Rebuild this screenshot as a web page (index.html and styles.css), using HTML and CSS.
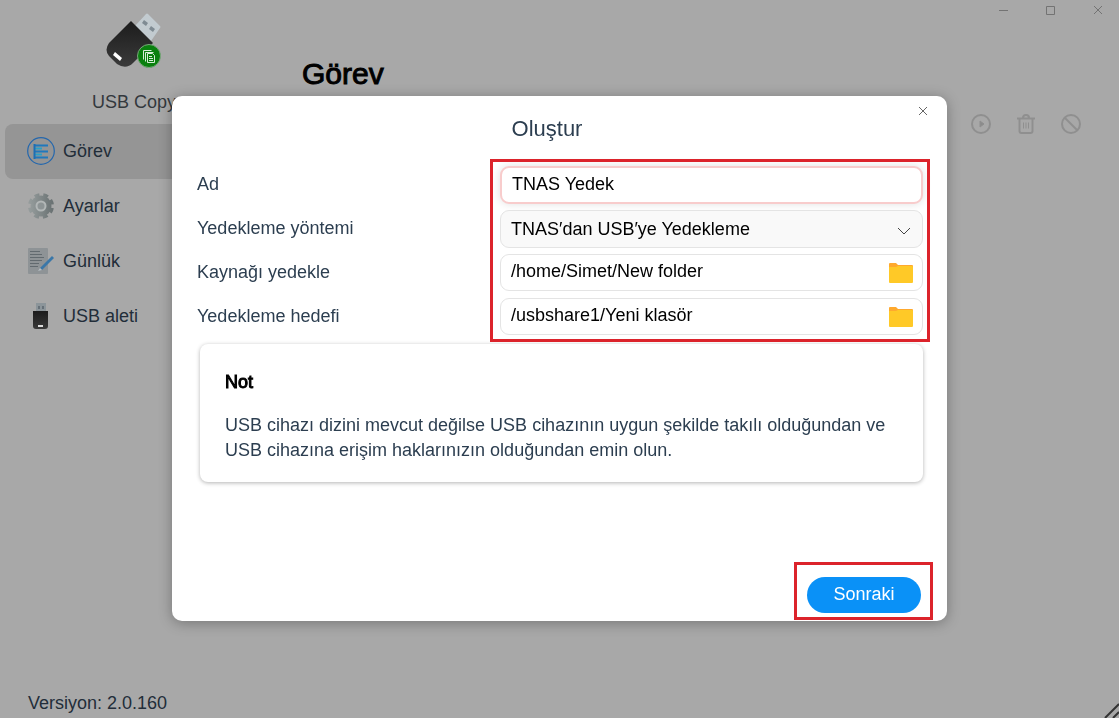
FILE: index.html
```html
<!DOCTYPE html>
<html lang="tr">
<head>
    <meta charset="UTF-8">
    <meta name="viewport" content="width=device-width, initial-scale=1.0">
    <title>USB Copy</title>
    <link rel="stylesheet" href="styles.css">
</head>
<body>
    <div class="app">
        <aside class="sidebar">
            <div class="brand">
                <svg width="56" height="56" viewBox="0 0 56 56">
                    <defs>
                        <linearGradient id="usbBody" x1="0" y1="0" x2="0" y2="1">
                            <stop offset="0" stop-color="#1c1c1c"/>
                            <stop offset="1" stop-color="#3a3a3a"/>
                        </linearGradient>
                    </defs>
                    <path d="M29 13 L40 1 Q41 0 42 1 L54 13 Q55 14 54 15 L45 28 Z" fill="#c2cbd0"/>
                    <path d="M38 7l4 3-2 3-4-3zM45 13l4 3-2 3-4-3z" fill="#7f8b93"/>
                    <path d="M25 8 L47 30 L27 50 Q20 57 11 51 L3 43 Q-2 37 3 30 Z" fill="url(#usbBody)"/>
                    <path d="M9 39l7 6-2 3-7-6z" fill="#fff"/>
                    <circle cx="43" cy="43" r="11.5" fill="#0a800f" stroke="#7ba67d"/>
                    <path d="M37.500 46.500v-9h8M39.500 48.500v-9h8" fill="none" stroke="#d6ecd6"/>
                    <path d="M41.500 40.500h5l2 2v7h-7z" fill="#0a800f" stroke="#d6ecd6"/>
                    <path d="M43 43.500h3M43 45.500h4M43 47.500h4" stroke="#d6ecd6"/>
                </svg>
                <div class="brand-name">USB Copy</div>
            </div>
            <nav class="menu">
                <a href="#" class="menu-item active">
                    <svg width="28" height="28" viewBox="0 0 28 28">
                        <circle cx="14" cy="14" r="13.3" fill="none" stroke="#2467ad" stroke-width="1.200"/>
                        <path d="M7 8.500h14M7 14.500h14M7 20.500h14" stroke="#1f78bd" stroke-width="2"/>
                        <path d="M7 11.500h8M7 17.500h8" stroke="#2c9fc6" stroke-width="2"/>
                        <path d="M7.500 7v15" stroke="#1c6fb4" stroke-width="2"/>
                    </svg>
                    Görev
                </a>
                <a href="#" class="menu-item">
                    <svg width="28" height="28" viewBox="0 0 28 28">
                        <defs>
                            <linearGradient id="gear">
                                <stop offset="0" stop-color="#949b9b"/>
                                <stop offset="1" stop-color="#6b7374"/>
                            </linearGradient>
                        </defs>
                        <circle cx="14" cy="14" r="10.5" fill="url(#gear)"/>
                        <circle cx="14" cy="14" r="11" fill="none" stroke="url(#gear)" stroke-width="4" stroke-dasharray="4.8 3.84" stroke-dashoffset="-1.900"/>
                        <circle cx="14" cy="14" r="4.500" fill="#8d9495" stroke="#b2b7b7" stroke-width="2"/>
                    </svg>
                    Ayarlar
                </a>
                <a href="#" class="menu-item">
                    <svg width="28" height="28" viewBox="0 0 28 28">
                        <rect x="1" y="1" width="20" height="26" rx="1" fill="#8e9396"/>
                        <path d="M3 4.500h10M3 7.500h12M3 10.500h14M3 13.500h12M3 16.500h9M3 19.500h8" stroke="#626a6f"/>
                        <path d="M13 21L25 9l2 2-12 12z" fill="#3a77a8"/>
                        <path d="M13 21l2 2-4 1z" fill="#b5bdc2"/>
                    </svg>
                    Günlük
                </a>
                <a href="#" class="menu-item">
                    <svg width="28" height="28" viewBox="0 0 28 28">
                        <rect x="9" y="1" width="10" height="9" fill="#8c959a"/>
                        <path d="M11 4h2v3h-2zM15 4h2v3h-2z" fill="#667078"/>
                        <path d="M6 9h15v15q0 3-3 3H9q-3 0-3-3z" fill="url(#usbBody)"/>
                        <path d="M11 23h5v2h-5z" fill="#ddd"/>
                    </svg>
                    USB aleti
                </a>
            </nav>
            <div class="version">Versiyon: 2.0.160</div>
        </aside>

        <main class="content">
            <div class="window-controls">
                <button type="button" aria-label="Küçült">
                    <svg width="10" height="10" viewBox="0 0 10 10"><path d="M0 5.500h9"/></svg>
                </button>
                <button type="button" aria-label="Büyüt">
                    <svg width="10" height="10" viewBox="0 0 10 10"><path d="M.5 1.500h8v8h-8z"/></svg>
                </button>
                <button type="button" aria-label="Pencereyi kapat">
                    <svg width="10" height="10" viewBox="0 0 10 10"><path d="M1 1l8 8M9 1L1 9"/></svg>
                </button>
            </div>
            <h1>Görev</h1>
            <div class="toolbar">
                <button type="button" aria-label="Başlat">
                    <svg width="20" height="20" viewBox="0 0 20 20"><circle cx="10" cy="10" r="9"/><path d="M9 7l4 3-4 3z" fill="#8b8b8b" stroke-width="1"/></svg>
                </button>
                <button type="button" aria-label="Sil">
                    <svg width="20" height="20" viewBox="0 0 20 20"><path d="M1 4.500h18M7 4q0-3 3-3t3 3M3.500 5v12q0 2 2 2h9q2 0 2-2V5"/><path d="M7.500 8.500v6M10 8.500v6M12.500 8.500v6" stroke-width="1"/></svg>
                </button>
                <button type="button" aria-label="Durdur">
                    <svg width="20" height="20" viewBox="0 0 20 20"><circle cx="10" cy="10" r="9"/><path d="M4 4l12 12"/></svg>
                </button>
            </div>
        </main>
        <svg class="grip" width="15" height="15" viewBox="0 0 15 15"><path d="M1 15L15 1M9 15l6-6"/></svg>
    </div>

    <div class="overlay">
        <form class="modal">
            <button type="button" class="close" aria-label="Kapat">
                <svg width="10" height="10" viewBox="0 0 10 10"><path d="M1 1l8 8M9 1L1 9"/></svg>
            </button>
            <h2>Oluştur</h2>
            <div class="fields">
                <label for="name">Ad</label>
                <input type="text" id="name" class="control focused" value="TNAS Yedek">

                <label for="method">Yedekleme yöntemi</label>
                <div class="select-box">
                    <select id="method" class="control">
                        <option>TNAS′dan USB′ye Yedekleme</option>
                    </select>
                    <svg class="chevron" width="14" height="8" viewBox="0 0 14 8"><path d="M1 1l6 6 6-6"/></svg>
                </div>

                <label for="source">Kaynağı yedekle</label>
                <div class="control path-box">
                    <input type="text" id="source" value="/home/Simet/New folder">
                    <button type="button" aria-label="Kaynak klasörü seç">
                        <svg width="26" height="22" viewBox="0 0 26 22"><path d="M1 2q0-1 1-1h6l2 2h14q1 0 1 1v6H1z" fill="#ffa92e"/><path d="M1 5h7l2-1h14q1 0 1 1v15q0 1-1 1H2q-1 0-1-1z" fill="#ffc927"/></svg>
                    </button>
                </div>

                <label for="target">Yedekleme hedefi</label>
                <div class="control path-box">
                    <input type="text" id="target" value="/usbshare1/Yeni klasör">
                    <button type="button" aria-label="Hedef klasörü seç">
                        <svg width="26" height="22" viewBox="0 0 26 22"><path d="M1 2q0-1 1-1h6l2 2h14q1 0 1 1v6H1z" fill="#ffa92e"/><path d="M1 5h7l2-1h14q1 0 1 1v15q0 1-1 1H2q-1 0-1-1z" fill="#ffc927"/></svg>
                    </button>
                </div>
                <div class="highlight"></div>
            </div>

            <div class="note">
                <h3>Not</h3>
                <p>USB cihazı dizini mevcut değilse USB cihazının uygun şekilde takılı olduğundan ve USB cihazına erişim haklarınızın olduğundan emin olun.</p>
            </div>

            <div class="actions">
                <div class="marked">
                    <button type="submit" class="next">Sonraki</button>
                </div>
            </div>
        </form>
    </div>
</body>
</html>
```
FILE: styles.css
```css
* {
    box-sizing: border-box;
}
body {
    margin: 0;
    background: #a8a8a8;
    color: #222d39;
    font-family: "Liberation Sans", Arial, sans-serif;
    font-size: 18px;
}
h1, h2, h3, p {
    margin: 0;
    font-weight: normal;
}
svg {
    display: block;
    flex: none;
}
button {
    padding: 0;
    border: none;
    background: none;
    font: inherit;
    cursor: pointer;
}
.app {
    display: flex;
    min-height: 100vh;
    position: relative;
    overflow: hidden;
}

/* sidebar */
.sidebar {
    display: flex;
    flex-direction: column;
    width: 268px;
    padding: 13px 5px 4px;
}
.brand {
    display: flex;
    flex-direction: column;
    align-items: center;
    gap: 22px;
    height: 111px;
}
.brand-name {
    line-height: 22px;
    color: #33383d;
}
.menu-item {
    display: flex;
    align-items: center;
    gap: 8px;
    height: 55px;
    padding-left: 22px;
    padding-bottom: 1px;
    border-radius: 8px;
    color: #222d39;
    text-decoration: none;
}
.menu-item.active {
    background: #959595;
}
.version {
    margin-top: auto;
    padding-left: 23px;
    line-height: 22px;
}

/* main area */
.content {
    flex: 1;
    padding: 0 16px 0 34px;
}
.window-controls {
    display: flex;
    justify-content: flex-end;
    gap: 37px;
    padding-top: 5px;
}
.window-controls svg {
    fill: none;
    stroke: #737373;
}
h1 {
    margin-top: 39px;
    font-size: 30px;
    line-height: 40px;
    color: #000;
    -webkit-text-stroke: 1px #000;
}
.toolbar {
    display: flex;
    justify-content: flex-end;
    gap: 25px;
    padding: 20px 22px 0 0;
}
.toolbar svg {
    fill: none;
    stroke: #8f8f8f;
    stroke-width: 2;
}
.grip {
    position: absolute;
    right: 0;
    bottom: 0;
    stroke: #333;
    stroke-width: 2;
}

/* dialog */
.overlay {
    position: fixed;
    inset: 0;
    display: flex;
    align-items: center;
    justify-content: center;
    padding-bottom: 1px;
}
.modal {
    position: relative;
    width: 775px;
    max-width: 100%;
    padding: 20px 24px 0 25px;
    border-radius: 10px;
    background: #fff;
    box-shadow: 0 2px 14px rgba(0, 0, 0, 0.3);
    color: #2c3e50;
}
.close {
    position: absolute;
    top: 10px;
    right: 19px;
}
.close svg {
    fill: none;
    stroke: #666;
}
h2 {
    padding-right: 26px;
    font-size: 22px;
    line-height: 26px;
    text-align: center;
}
.fields {
    position: relative;
    display: grid;
    grid-template-columns: 303px 1fr;
    grid-auto-rows: 38px;
    gap: 6px 0;
    margin-top: 24px;
}
.fields label {
    line-height: 36px;
}
.control {
    width: 100%;
    height: 38px;
    padding: 0 10px;
    border: 1px solid #e4e4e4;
    border-radius: 9px;
    background: #fff;
    color: #000;
    font: inherit;
    outline: none;
}
.focused {
    padding-bottom: 2px;
    border: 2px solid #f8cccc;
    box-shadow: 0 0 8px rgba(0, 0, 0, 0.12);
}
.select-box {
    position: relative;
}
.select-box .control {
    appearance: none;
    background: #f9f9f9;
}
.chevron {
    position: absolute;
    top: 17px;
    right: 12px;
    fill: none;
    stroke: #444;
    pointer-events: none;
}
.path-box {
    display: flex;
    align-items: center;
    height: 37px;
    padding-right: 8px;
}
.path-box input {
    flex: 1;
    min-width: 0;
    padding: 0 0 2px;
    border: none;
    outline: none;
    background: none;
    color: #000;
    font: inherit;
}
/* red frame round the four inputs */
.highlight {
    position: absolute;
    top: -7px;
    right: -7px;
    bottom: -6px;
    left: 293px;
    border: 3px solid #dc232b;
    pointer-events: none;
}
.note {
    margin: 8px 0 0 3px;
    padding: 26px 25px 19px;
    border-radius: 8px;
    box-shadow: 0 1px 4px rgba(0, 0, 0, 0.3);
    line-height: 25px;
}
.note h3 {
    margin-bottom: 18px;
    font-size: 18px;
    color: #000;
    -webkit-text-stroke: 1px #000;
}
.actions {
    display: flex;
    justify-content: flex-end;
    margin: 80px -10px 0 0;
    padding-bottom: 1px;
}
.marked {
    padding: 12px 9px 4px 10px;
    border: 3px solid #dc232b;
}
.next {
    display: block;
    width: 114px;
    height: 36px;
    padding-bottom: 2px;
    border-radius: 18px;
    background: #0a91f7;
    color: #fff;
}
```
